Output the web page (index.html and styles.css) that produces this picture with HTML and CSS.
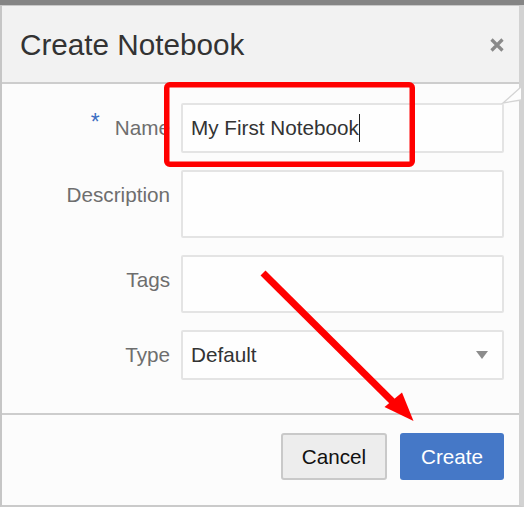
FILE: index.html
```html
<!DOCTYPE html>
<html>
<head>
<meta charset="utf-8">
<link rel="stylesheet" href="styles.css">
</head>
<body>
<div class="modal">
  <div class="modal-header">
    <h1 class="title">Create Notebook</h1>
    <span class="close"><svg width="14" height="14" viewBox="0 0 14 14"><path d="M1.5 1.5L12.5 12.5M12.5 1.5L1.5 12.5" stroke="#8a8a8a" stroke-width="3.2"/></svg></span>
  </div>
  <div class="modal-body">
    <div class="row r1">
      <div class="label"><span class="req">*</span>Name</div>
      <div class="field"><span class="value">My First Notebook</span><span class="caret"></span></div>
    </div>
    <div class="row r2">
      <div class="label">Description</div>
      <div class="field"></div>
    </div>
    <div class="row r3">
      <div class="label">Tags</div>
      <div class="field"></div>
    </div>
    <div class="row r4">
      <div class="label">Type</div>
      <div class="field select"><span class="value">Default</span><span class="tri"></span></div>
    </div>
  </div>
  <div class="modal-footer">
    <button class="btn btn-cancel">Cancel</button>
    <button class="btn btn-create">Create</button>
  </div>
</div>
<svg class="annot" width="524" height="507" viewBox="0 0 524 507">
  <polyline points="521,87 503,103 521,100" fill="#fdfdfd" stroke="#d4d4d4" stroke-width="1.3"/>
  <rect x="166.75" y="84.75" width="245.5" height="79.5" rx="3" fill="none" stroke="#ff0000" stroke-width="5.5"/>
  <line x1="263" y1="273" x2="398" y2="407" stroke="#ff0000" stroke-width="7"/>
  <polygon points="413.5,421 384.5,407 402,392.5" fill="#ff0000"/>
</svg>
</body>
</html>
```
FILE: styles.css
```css
* { box-sizing: border-box; }
html, body { margin: 0; padding: 0; }
body {
  width: 524px;
  height: 507px;
  overflow: hidden;
  background: #858585;
  font-family: "Liberation Sans", Arial, sans-serif;
  position: relative;
}
.modal {
  margin-top: 5px;
  width: 524px;
  height: 502px;
  background: #fcfcfc;
  border-top: 1px solid #c9c9c9;
  border-left: 2px solid #c6c6c6;
  border-right: 5px solid #d2d2d2;
  border-bottom: 2px solid #cacaca;
  display: flex;
  flex-direction: column;
}
.modal-header {
  height: 78px;
  background: #f2f2f2;
  border-bottom: 2px solid #cdcdcd;
  display: flex;
  align-items: flex-start;
  justify-content: space-between;
  padding: 22px 15px 0 18px;
}
.title {
  margin: 0;
  font-size: 29.7px;
  line-height: 34px;
  font-weight: normal;
  color: #333;
}
.close {
  display: block;
  width: 14px;
  height: 14px;
  margin-top: 10px;
}
.close svg { display: block; }
.modal-body {
  padding: 19px 15px 33px 0;
  display: grid;
  grid-template-columns: 168px 323px;
  column-gap: 11px;
  row-gap: 17px;
}
.row { display: contents; }
.label {
  height: 50px;
  line-height: 50px;
  text-align: right;
  font-size: 20.7px;
  color: #6e6e6e;
  white-space: nowrap;
}
.req {
  color: #3d6fc2;
  font-size: 23px;
  line-height: 0;
  vertical-align: 5px;
  margin-right: 15px;
}
.field {
  border: 2px solid #e4e4e4;
  border-radius: 2px;
  background: #fefefe;
  font-size: 20.7px;
  color: #333;
  padding-left: 8px;
  display: flex;
  align-items: center;
}
.r1 .field { height: 50px; }
.r2 .field { height: 68px; }
.r3 .field { height: 58px; }
.r4 .field { height: 50px; }
.caret {
  display: inline-block;
  width: 1px;
  height: 28px;
  background: #222;
  margin-left: 0;
}
.select { justify-content: space-between; padding-right: 14px; }
.tri {
  width: 0;
  height: 0;
  border-left: 6px solid transparent;
  border-right: 6px solid transparent;
  border-top: 8px solid #8c8c8c;
}
.modal-footer {
  border-top: 2px solid #cdcdcd;
  padding: 18px 15px 0 0;
  display: flex;
  justify-content: flex-end;
  gap: 13px;
}
.btn {
  height: 47px;
  border-radius: 3px;
  font-family: "Liberation Sans", Arial, sans-serif;
  font-size: 20.7px;
  padding: 0;
}
.btn-cancel {
  width: 106px;
  background: #ededed;
  border: 2px solid #c9c9c9;
  color: #111;
}
.btn-create {
  width: 104px;
  background: #4578c7;
  border: none;
  color: #fff;
}
.annot {
  position: absolute;
  left: 0;
  top: 0;
  pointer-events: none;
}
```
